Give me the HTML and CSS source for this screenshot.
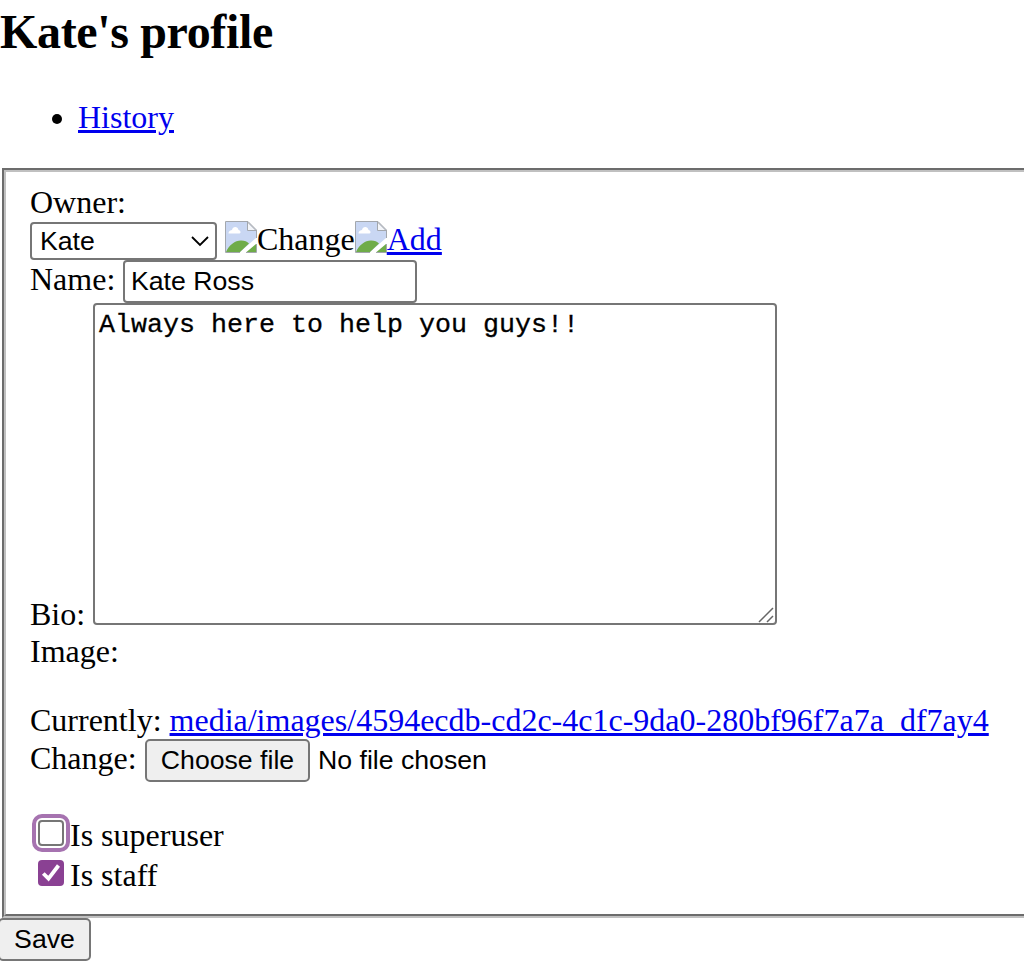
FILE: index.html
```html
<!DOCTYPE html>
<html lang="en">
<head>
<meta charset="utf-8">
<title>Kate's profile</title>
<link rel="stylesheet" href="styles.css">
</head>
<body>
<svg class="defs" width="0" height="0">
  <symbol id="broken" viewBox="0 0 32 32">
    <path d="M1 1H23L31 9V17L15 31H1Z" fill="#c9d7f3"/>
    <path d="M3.500 12.500C3.500 9.500 6 9.500 7 9C7.500 5 13 5 13.500 9C16 9.500 16 12.500 14.500 12.500Z" fill="#fff"/>
    <path d="M1 31C4 24 10 19.500 16 19.500C20 19.500 22 20.500 24 22.500L15 31ZM31 23V31H21.500Z" fill="#6fac49"/>
    <path d="M.5 31.500V.5H23L31.500 9V17M.5 31.500H15M21 31.500H31.500V23" fill="none" stroke="#a3a7ad"/>
    <path d="M22.500 1V9.500H31Z" fill="#f4f6fa" stroke="#a3a7ad"/>
  </symbol>
</svg>
<h1 class="title">Kate's profile</h1>
<ul class="tools"><li><a href="#">History</a></li></ul>
<form class="form">
  <div class="fieldset">
    <div class="row owner-label">Owner:</div>
    <div class="row owner">
      <div class="select"><span>Kate</span><svg width="18" height="12" viewBox="0 0 18 12"><path d="M1 2L9 10L17 2" fill="none" stroke="#000" stroke-width="1.800"/></svg></div>
      <svg class="pic" width="32" height="32"><use href="#broken"/></svg><span class="word">Change</span><svg class="pic" width="32" height="32"><use href="#broken"/></svg><a class="word" href="#">Add</a>
    </div>
    <div class="row name"><label for="name">Name:</label><input id="name" class="input" type="text" value="Kate Ross"></div>
    <div class="row bio"><label for="bio">Bio:</label>
      <div class="area"><textarea id="bio" class="textarea">Always here to help you guys!!</textarea><svg class="grip" width="16" height="16" viewBox="0 0 16 16"><path d="M1 15L15 1M9 15L15 9" fill="none" stroke="#666" stroke-width="1.500"/></svg></div>
    </div>
    <div class="row image">Image:</div>
    <div class="row current">Currently:&nbsp;<a href="#">media/images/4594ecdb-cd2c-4c1c-9da0-280bf96f7a7a_df7ay4</a></div>
    <div class="row file"><span class="file-label">Change:</span><button type="button" class="button choose">Choose file</button><span class="none">No file chosen</span></div>
    <div class="row super"><span class="check focus"></span><span>Is superuser</span></div>
    <div class="row staff"><span class="check on"><svg width="26" height="26" viewBox="0 0 26 26"><path d="M5.300 13.500L10.500 18.700L20.500 5.500" fill="none" stroke="#fff" stroke-width="3.800"/></svg></span><span>Is staff</span></div>
  </div>
  <button type="button" class="button save">Save</button>
</form>
</body>
</html>
```
FILE: styles.css
```css
* { box-sizing: border-box; }
html, body { overflow: hidden; }
body { margin: 0; height: 972px; background: #fff; color: #000; font: 32px/36px "Liberation Serif", "Times New Roman", serif; }
.defs { display: block; height: 0; }
a { color: #0000ee; text-decoration: underline; text-decoration-thickness: 3px; }
.title { margin: 0; padding-top: 5px; height: 99px; font-size: 48px; line-height: 54px; font-weight: bold; letter-spacing: -0.34px; }
.tools { margin: 0; padding: 0 0 0 78px; height: 69px; }
.fieldset { margin-left: 2px; width: 1040px; height: 750px; border: 4px groove #c0c0c0; padding: 12px 0 0 24px; }
.row { display: flex; align-items: flex-start; white-space: nowrap; }
.owner-label { height: 36px; }
.owner { height: 40px; padding-top: 1px; }
.select { display: flex; align-items: center; justify-content: space-between; width: 187px; height: 38px; margin: 1px 8px 0 0; padding: 0 6px 0 8px; border: 2px solid #767676; border-radius: 4px; font: 26.67px/32px "Liberation Sans", Arial, sans-serif; }
.pic { display: block; flex: none; }
.name { height: 43px; }
.name label { width: 93px; padding-top: 1px; }
.input { width: 294px; height: 43px; padding: 0 6px; border: 2px solid #767676; border-radius: 4px; outline: 0; background: #fff; color: #000; font: 26.67px/32px "Liberation Sans", Arial, sans-serif; }
.bio { height: 329px; }
.bio label { width: 63px; align-self: flex-end; }
.area { position: relative; width: 684px; height: 322px; }
.textarea { display: block; width: 684px; height: 322px; margin: 0; padding: 5px 4px; border: 2px solid #767676; border-radius: 4px; resize: none; outline: 0; overflow: hidden; background: #fff; color: #000; font: 26.67px/30px "Liberation Mono", "Courier New", monospace; -webkit-text-stroke: 0.3px #000; }
.grip { position: absolute; right: 3px; bottom: 2px; }
.image { margin-top: 1px; height: 69px; }
.current { height: 37px; }
.file { height: 78px; }
.file-label { width: 115px; padding-top: 1px; }
.button { display: block; margin: 0; padding: 0 0 2px; border: 2px solid #767676; border-radius: 5px; background: #efefef; color: #000; font: 26.67px/32px "Liberation Sans", Arial, sans-serif; }
.choose { width: 165px; height: 43px; }
.none { margin-left: 8px; padding-top: 5px; font: 26.67px/32px "Liberation Sans", Arial, sans-serif; }
.super, .staff { height: 40px; }
.check { flex: none; width: 26px; height: 26px; margin: 3px 6px 0 8px; border: 2px solid #767676; border-radius: 5px; background: #fff; }
.focus { outline: 4px solid #a673b0; outline-offset: 2px; border-radius: 4px; }
.on { border: 0; border-radius: 4px; background: #8a4193; }
.on svg { display: block; }
.save { width: 93px; height: 43px; margin-left: -2px; }
```
